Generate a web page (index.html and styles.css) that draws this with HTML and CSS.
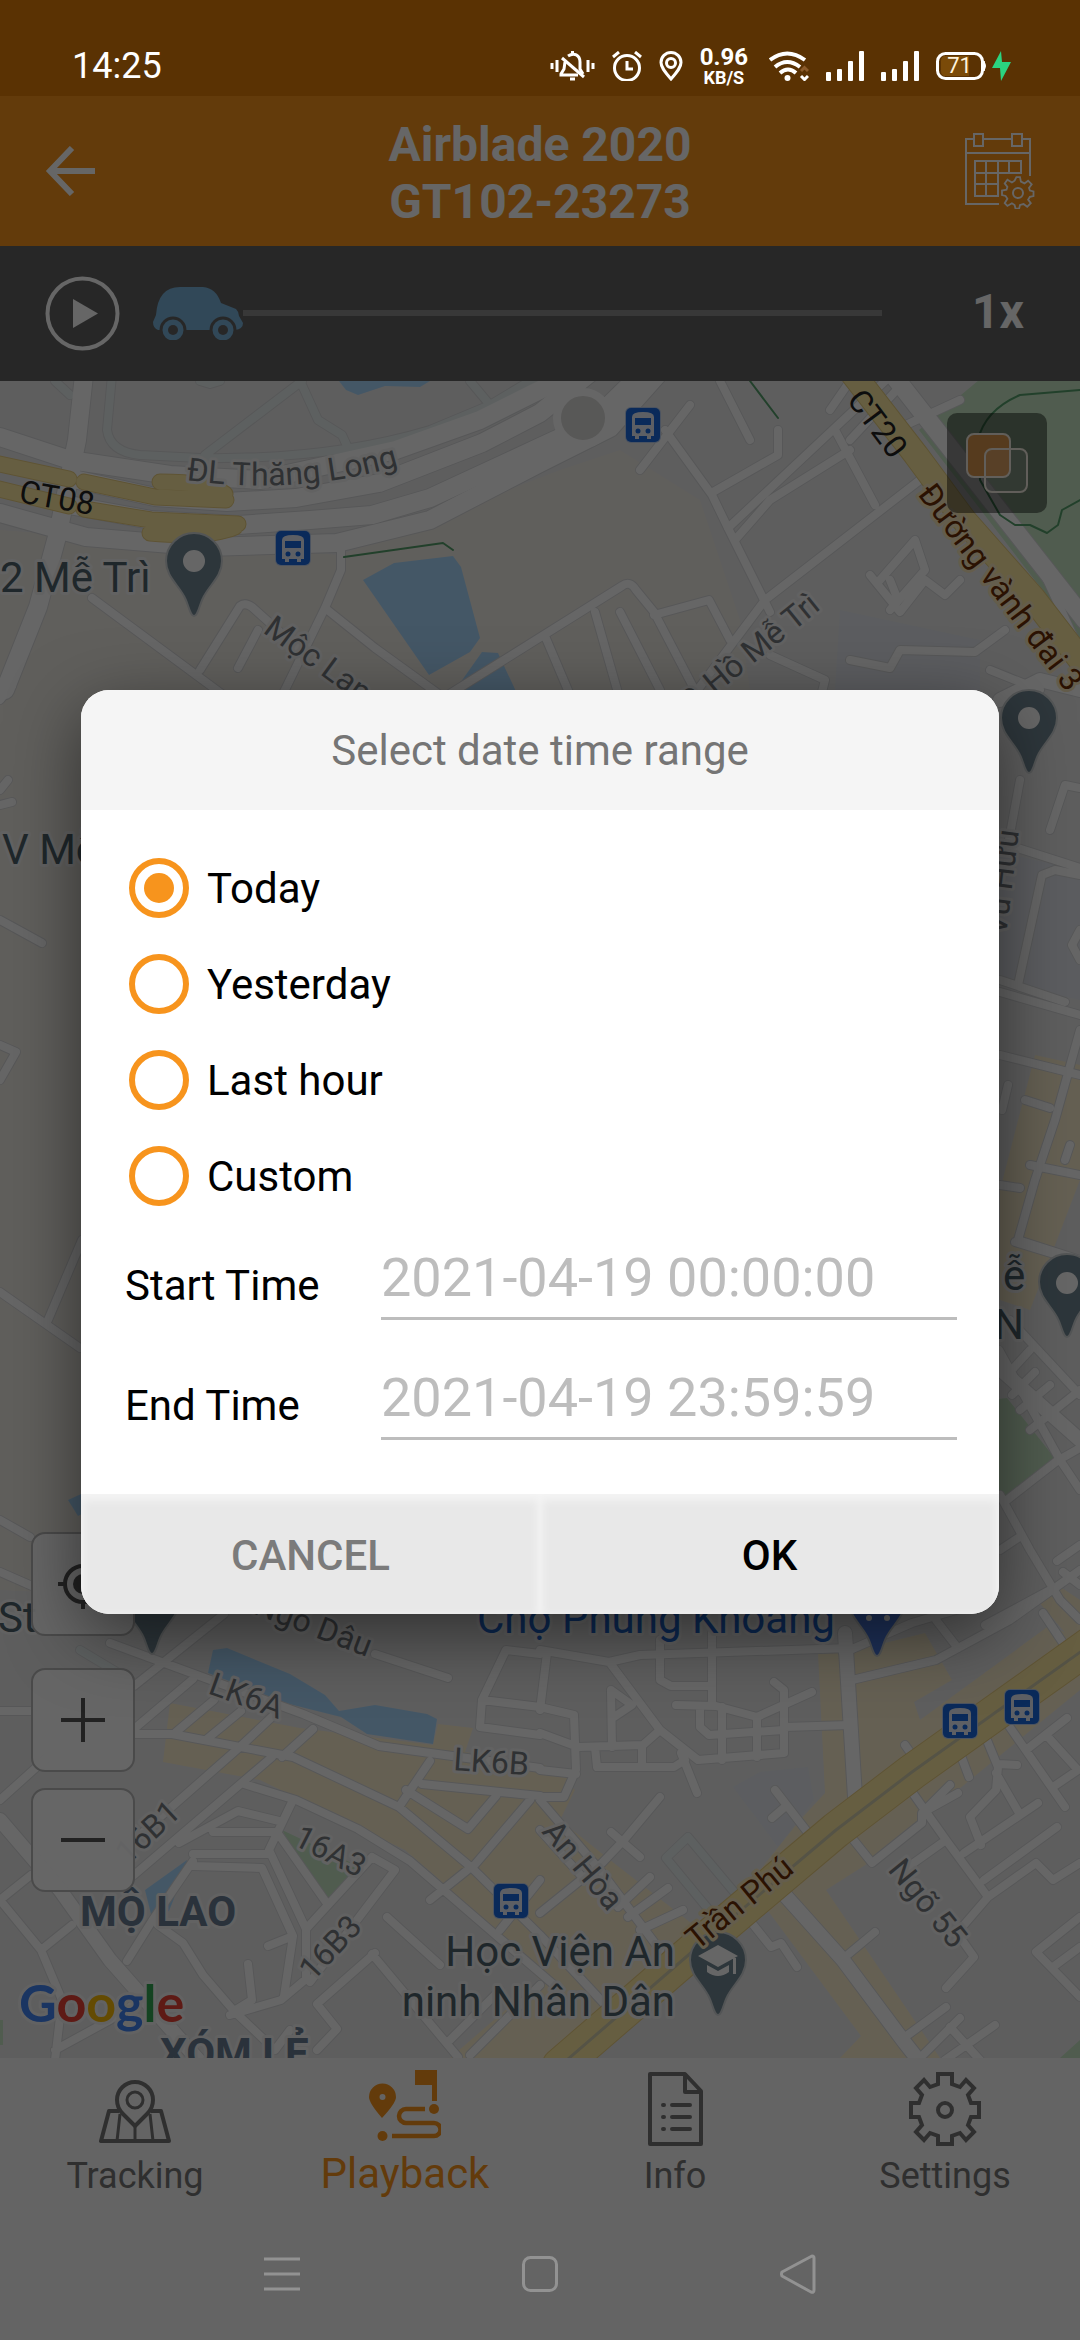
FILE: index.html
```html
<!DOCTYPE html>
<html lang="en">
<head>
<meta charset="utf-8">
<meta name="viewport" content="width=device-width, initial-scale=1">
<title>Playback</title>
<link rel="stylesheet" href="styles.css">
</head>
<body>
<div class="screen">
  <div class="status">
    <time class="status-time">14:25</time>
    <div class="status-icons">
      <svg width="45" height="30" viewBox="0 0 45 30" fill="none" stroke="#fff" stroke-width="3"><path d="M2 12v6M7 9v12M38 9v12M43 12v6"/><path d="M18 5c6-4 12-1 12 6v7l3 5M15 11l-1 7-3 5v1h17" /><path d="M12 7l22 19"/><path d="M22.500 0v3M20 28h5" stroke-width="3"/></svg>
      <svg width="30" height="30" viewBox="0 0 30 30" fill="none" stroke="#fff" stroke-width="3"><circle cx="15" cy="17" r="12.500"/><path d="M15 10v8h6M1 6l6-5M29 6l-6-5"/></svg>
      <svg width="24" height="30" viewBox="0 0 24 30" fill="none" stroke="#fff" stroke-width="3"><path d="M12 28C5 20 2 16 2 11.500a10 10 0 0 1 20 0C22 16 19 20 12 28z"/><circle cx="12" cy="12" r="4.500"/></svg>
      <div class="speed"><span>0.96</span><small>KB/S</small></div>
      <svg width="40" height="30" viewBox="0 0 40 30" fill="none" stroke="#fff" stroke-width="4"><path d="M1 9q17-13 35 0M6 16q12-10 25 0M11 22q8-7 16 0"/><circle cx="18.500" cy="27" r="3" fill="#fff" stroke="none"/><path d="M32 20l3.500-3.500L39 20" stroke="#8a5a2a" stroke-width="3"/><path d="M32 25l3.500 3.500L39 25" stroke-width="3"/></svg>
      <svg width="38" height="30" viewBox="0 0 38 30" fill="#fff"><rect y="21" width="5" height="9" rx="1"/><rect x="11" y="18" width="5" height="12" rx="1"/><rect x="22" y="10" width="5" height="20" rx="1"/><rect x="33" width="5" height="30" rx="1"/></svg>
      <svg width="38" height="30" viewBox="0 0 38 30" fill="#fff"><rect y="21" width="5" height="9" rx="1"/><rect x="11" y="18" width="5" height="12" rx="1"/><rect x="22" y="10" width="5" height="20" rx="1"/><rect x="33" width="5" height="30" rx="1"/></svg>
      <svg width="76" height="30" viewBox="0 0 76 30"><rect x="1.500" y="2.500" width="45" height="25" rx="8" fill="none" stroke="#fff" stroke-width="3"/><path d="M8 5h25v20H8q-3-1-3-5V10q0-4 3-5z" fill="#7a4a08"/><path d="M48 10q3 5 0 10z" fill="#fff" stroke="#fff"/><text x="23.500" y="22" text-anchor="middle" class="battery">71</text><path d="M65 0L56 17h8l1 13 10-19h-9z" fill="#2bd480"/></svg>
    </div>
  </div>

  <header class="header">
    <button class="icon-btn" aria-label="Back"><svg width="50" height="50" viewBox="0 0 50 50" fill="none" stroke="#fff" stroke-width="6"><path d="M27 2L5 25l22 23M5 25h45"/></svg></button>
    <h1 class="title">Airblade 2020<br>GT102-23273</h1>
    <button class="icon-btn" aria-label="Select dates"><svg width="70" height="76" viewBox="0 0 70 76" fill="none" stroke="#fff" stroke-width="2"><path d="M8 6H1v65h33M18 6h29M57 6h8v37M1 20h64"/><path d="M9 1h9v12H9zM47 1h10v12H47z"/><path d="M10 28h46v12H10zM10 40v23h23V28M10 51h23M21 28v35M44 28v12"/><circle cx="53" cy="60" r="5"/><path d="M51 44h4l1 5 4 2 4-3 4 4-3 4 1 3 4 1v5l-4 1-2 3 3 4-4 4-4-3-4 1-1 4h-4l-1-4-3-2-5 3-3-3 3-5-2-3-4-1v-5l5-1 1-3-3-4 3-4 5 3 3-2z" transform="translate(5.500 4.500) scale(.9)"/></svg></button>
  </header>

  <section class="player">
    <button class="icon-btn" aria-label="Play"><svg width="75" height="75" viewBox="0 0 75 75"><circle cx="37.500" cy="37.500" r="35" fill="none" stroke="#fff" stroke-width="4"/><path d="M28 23l25 14.500L28 52z" fill="#fff"/></svg></button>
    <input class="seek" type="range" min="0" max="100" value="0" aria-label="Playback position">
    <button class="rate">1x</button>
  </section>

  <main class="map">
    <svg class="map-canvas" viewBox="0 381 1080 1677" preserveAspectRatio="xMidYMid slice" role="img" aria-label="Map">
      <defs>
        <g id="small">
          <path d="M341 550V570L325 608 280 700M325 608L375 648 440 695M92 598L230 700M200 670L240 606Q245 602 252 607L300 650M238 668L258 630"/>
          <path d="M448 695L622 586Q630 580 636 590L654 612 700 700M545 636L570 695M595 612L620 700M654 615L709 600 730 640M620 612L660 690M665 430L712 495 728 528 770 612M778 430V455L713 492M728 528L870 395 885 381M690 700L765 600 920 480M735 540L770 500 850 450M690 405L640 470M835 430L875 505M850 440L905 381"/>
          <path d="M880 580L915 540 925 570 890 610 898 600 890 580M870 575L900 612 925 580 945 595 960 580M1038 560L1075 640M850 660L890 668 900 650 975 652 1005 630M770 655L825 680 820 700M990 670L1040 690M720 381L750 440M830 410L850 381M960 400L895 430"/>
          <path d="M0 920L42 943M0 1045L16 1052 0 1080M0 1292L80 1348M48 1320L82 1240M30 1537L0 1520M0 1572L32 1586M0 1711H32M0 700L12 686M0 790L8 780M0 805L12 802"/>
          <path d="M1020 780L1008 845M1050 830L1065 785 1080 788M1008 845L1080 868M1018 985L1042 875 1055 870 1080 875M1000 980L1065 1002M1000 992L1080 1015M1000 1055L1060 1070 1080 1075M1008 1085L1002 1110M1080 1030L1055 1120 1035 1180 1018 1240 1080 1260M1000 1185L1020 1188M1025 1100L1050 1108M1030 1165L1080 1175M1065 1160L1070 1145M1080 930L1072 945 1080 960"/>
          <path d="M1010 1320L1080 1395M999 1350L1060 1460 1080 1490M1000 1495L1030 1550 1060 1600 1080 1620M1057 1461L1007 1500M1000 1550L1018 1538M985 1625L1050 1590M1057 1461L1080 1448M1030 1430L1080 1390M1020 1410L1050 1385M1012 1395L1035 1372M1010 1372L1030 1350M1057 1561L1080 1545M1063 1572L1080 1585M1015 1242L1080 1262"/>
          <path d="M540 1650L609 1662 640 1655 850 1648M610 1663L660 1730 698 1760 784 1753V1690L774 1682M660 1640V1680L671 1686H710M712 1633V1703M676 1705L716 1706 757 1717 812 1692M700 1707V1727L709 1735 783 1730M722 1707V1760M757 1717V1757M784 1727L850 1725M852 1680L936 1660 1010 1620 1080 1570M843 1653L912 1623 990 1600M936 1620L957 1647M1043 1613L1063 1643M611 1690L612 1747M611 1690L632 1705 614 1717M540 1733L578 1747 643 1745 660 1730M540 1707L574 1715 576 1770 564 1797H540M595 1747L597 1767H674L685 1760M642 1745V1767M681 1753L697 1793M547 1653L540 1710M540 1770L576 1774"/>
          <path d="M660 1797L624 1840 602 1863 540 1913M611 1832L640 1857M775 1790L812 1838M772 1818L786 1806M747 1917L771 1947 781 1943 797 1967M875 1932L845 1957M852 1838L872 1863 922 1823V1813L958 1793M912 1792L946 1840 988 1897 957 1933 974 1957 946 1988M925 1810L950 1785M946 1840L908 1867M984 1733L998 1767 996 1790 970 1817 981 1845M998 1764L1017 1765M996 1773L1019 1813M1038 1803L964 1853M1057 1827L984 1880M1007 1723L1065 1807M1067 1718L1026 1750M1048 1737L1078 1770 1053 1787M988 1897L1036 1863 1053 1880 1080 1863M1080 1917L1036 1952 1080 1997M1053 1967L1080 1947M946 2007L905 2037M960 2018L920 2058M995 2025L945 2060M950 2027L980 2060M960 1753L969 1777M905 1745L912 1755M618 1907L650 1877M628 1917L668 1888M640 1930L683 1910"/>
          <path d="M134 1686L224 1614M110 1643L186 1671 303 1714 379 1746 540 1768M134 1729L193 1679M134 1734H172L293 1757 399 1807 472 1868 540 1935 610 2010M176 1732L214 1700M207 1739L241 1711M241 1746L275 1714M282 1757L313 1729M241 1746L134 1840M272 1757L134 1875M244 1784L296 1800 358 1829 410 1861 490 1930 560 1990M399 1807L430 1761M422 1784L540 1796M406 1790L468 1829 496 1796M472 1868L530 1800M179 1843L238 1811 279 1821M213 1832H275M193 1854H269M193 1866L262 1868 293 1936 284 1996M293 1800L269 1850 306 1929V1979L281 2000 230 2015M279 1835L328 1905 372 1857M306 1929L328 1905M372 1857L395 1870 310 1982M193 1861L152 1921 127 1961M0 1800L50 1755M0 1900L41 1950 62 2000 55 2060M41 1950L72 1925M55 2050L110 2020 140 2000M0 1900L31 1875M158 1925L183 1943 203 1975 234 2011 275 2050 290 2030M248 1964L252 2000 234 2011M268 1946L293 1936M387 1917L440 1965M375 1953L317 2004 337 2029 317 2050M372 1954L458 2057M482 1700L506 1650 540 1654M482 1700L540 1707M482 1700L480 1727 540 1735M375 1654L448 1678M540 1800L600 1870 660 1950M540 1830L585 1880M500 1930L540 1880M430 1900L470 1868M450 2040L500 1990M470 2055L540 1985"/>
        </g>
        <g id="wide">
          <path d="M84 375L77 440 58 533 38 607 5 690M0 437L70 460 170 475 260 480 396 450 480 420 580 370M0 513L86 537 207 547 337 543 430 520 540 463 610 428 660 372"/>
          <path d="M69 478L155 497 227 502 296 498 379 483 482 443 540 413 600 365M69 505L151 520 238 525 310 520 372 515 430 498 540 447 590 424 650 365"/>
          <path d="M893 375L1085 620"/>
        </g>
        <g id="mid"><path d="M845 1633L855 1797M783 1893L843 1960 905 2043 920 2062M0 1820L60 1890 110 1960 200 2062M1000 700L1040 680 1080 690M990 1360L1080 1440"/></g>
        <g id="tint"><path d="M112 375L107 430Q110 452 140 455L200 458Q330 460 430 430L490 405 540 375M205 455L302 381M302 385L318 420 342 435 348 448M470 381L490 405M709 1910L666 1858 688 1837 735 1893M55 381L70 395M200 381L210 384 220 381M80 1650L130 1680"/></g>
        <g id="gold"><path d="M-5 463L69 479M84 482L155 497 226 500M-5 488L69 506M84 509L151 520 238 524M160 482Q210 482 225 494M150 533Q210 538 235 527"/></g>
        <g id="pin"><path d="M0 54C-4 54-5 44-9 36-15 23-28 15-28-1A28 28 0 1 1 28-1C28 15 15 23 9 36 5 44 4 54 0 54z"/></g>
        <g id="bus"><rect x="-18" y="-18" width="36" height="36" rx="6" fill="#bcd0f0"/><rect x="-17" y="-17" width="34" height="34" rx="5" fill="#1a6ae0"/><path d="M-11 11V-8Q-11-13 0-13T11-8V11H8V14H4V11H-4V14H-8V11z" fill="#e8eefb"/><path d="M-8-7H8V0H-8z" fill="#1a6ae0"/><circle cx="-5" cy="6" r="2.500" fill="#1a6ae0"/><circle cx="5" cy="6" r="2.500" fill="#1a6ae0"/></g>
      </defs>

      <rect y="381" width="1080" height="1677" fill="#ebebec"/>
      <path fill="#f1ede6" d="M0 530L340 555 560 470 620 450 700 500 740 620 760 760 200 1600 0 1590z"/>
      <path fill="#e5e9ef" d="M840 610L980 640V690H835zM990 850L1080 870V1000L990 980zM733 1787L760 1772 808 1767 814 1800 778 1847z"/>
      <path fill="#c7e7c5" d="M985 375L919 430 1085 645V375zM990 1400L1007 1398 1057 1461 1007 1500 990 1494zM282 1830L358 1866 327 1907zM1060 2058L1080 2040V2058zM0 2020H3V2045H0z"/>
      <path fill="#fdf0cf" d="M163 1762L170 1703 300 1728 433 1745 438 1724 473 1728 465 1752 545 1765 575 1790 560 1820 610 1860 700 1930 640 2000 560 2058H450L540 1980 440 1880 405 1850 260 1780z"/>
      <path fill="#fdf0cf" d="M818 1653L845 1653 925 1633 952 1680 914 1702 920 1720 1050 1625 1080 1640V1690L970 1780 870 1862 826 1890 940 2058H840L861 2036 760 1900 690 1960 720 1920 800 1820 825 1793zM540 1772L570 1775 562 1790H540zM1035 1055L1080 1065V1180L1030 1310 1000 1300V1190zM1037 1600L1050 1580 1080 1600V1650z"/>
      <path fill="#abdaff" d="M339 375V381L346 390 358 395 385 386 420 387 430 381V375zM363 580L394 563 453 556 461 567 480 638 470 652 429 675zM448 700L482 652 498 653 520 700zM213 1650L227 1648 290 1674 325 1695 339 1711 375 1705 427 1714 437 1719 433 1744 367 1734 341 1717 289 1704 208 1673zM187 1860L186 1868 169 1911 152 1918 145 1890zM68 1500L78 1516 90 1510V1490z"/>
      <g class="lines">
        <use href="#small" class="case" stroke-width="10"/><use href="#tint" class="case" stroke-width="10"/>
        <use href="#mid" class="case" stroke-width="16"/><use href="#wide" class="case" stroke-width="20"/>
        <use href="#small" class="road" stroke-width="8"/><use href="#tint" stroke="#e9f1f0" stroke-width="8"/>
        <use href="#mid" class="road" stroke-width="14"/><use href="#wide" class="road" stroke-width="18"/>
        <ellipse cx="583" cy="418" rx="26" ry="26" fill="#dcdbd9" stroke="#fff" stroke-width="8"/>
        <use href="#gold" stroke="#ecd083" stroke-width="17"/><use href="#gold" stroke="#ffeca3" stroke-width="15"/>
        <path d="M850 370L916 455 964 520 1033 598 1090 672" stroke="#e8cf80" stroke-width="26"/>
        <path d="M850 370L916 455 964 520 1033 598 1090 672" stroke="#ffeca3" stroke-width="24"/>
        <path d="M1100 1638L912 1772 836 1830 700 1945 560 2066" stroke="#ecd083" stroke-width="37"/>
        <path d="M1100 1638L912 1772 836 1830 700 1945 560 2066" stroke="#ffeca3" stroke-width="35"/>
        <path d="M1100 1638L912 1772 836 1830 700 1945 560 2066" stroke="#d5cfae" stroke-width="3"/>
        <path d="M344 557L443 543 453 550M750 381L778 418M1080 390L1020 395Q985 410 978 440L980 480 1000 515 1015 525 1030 525 1047 533 1058 525 1062 510 1080 500" stroke="#56a06c" stroke-width="2"/>
      </g>

      <g fill="#718793" stroke="#cfd4d6" stroke-width="2">
        <use href="#pin" x="194" y="562"/><use href="#pin" x="1029" y="719"/><use href="#pin" x="1067" y="1283"/><use href="#pin" x="152" y="1600"/><use href="#pin" x="718" y="1961"/>
        <use href="#pin" x="877" y="1602" fill="#4b7be0"/>
      </g>
      <g fill="#fff"><circle cx="194" cy="561" r="11"/><circle cx="1029" cy="718" r="11"/><circle cx="1067" cy="1283" r="11"/><circle cx="869" cy="1618" r="3"/><circle cx="887" cy="1618" r="3"/>
        <path d="M698 1956L718 1945 738 1956 718 1967zM707 1965L718 1971 729 1965V1972Q718 1980 707 1972zM733 1958H736V1974H733z"/></g>
      <use href="#bus" x="643" y="425"/><use href="#bus" x="293" y="548"/><use href="#bus" x="960" y="1721"/><use href="#bus" x="1022" y="1707"/><use href="#bus" x="511" y="1901"/>

      <g class="street">
        <path id="thang-long" d="M186 480Q300 496 402 465" fill="none" stroke="none"/>
        <text><textPath href="#thang-long">ĐL Thăng Long</textPath></text>
        <text transform="translate(262 632) rotate(36)">Mộc Lan</text>
        <text transform="translate(690 715) rotate(-39)">P. Hồ Mễ Trì</text>
        <text transform="translate(1006 936) rotate(-83)">Vũ Hữu</text>
        <text transform="translate(252 1613) rotate(21)">Ngõ Dâu</text>
        <text transform="translate(207 1693) rotate(20)">LK6A</text>
        <text transform="translate(453 1770) rotate(4)">LK6B</text>
        <text transform="translate(292 1844) rotate(27)">16A3</text>
        <text transform="translate(313 1982) rotate(-47)">16B3</text>
        <text transform="translate(128 1865) rotate(-43)">16B1</text>
        <text transform="translate(541 1832) rotate(50)">An Hòa</text>
        <text transform="translate(887 1870) rotate(51)">Ngõ 55</text>
      </g>
      <g class="street highway">
        <text transform="translate(18 502) rotate(10)">CT08</text>
        <text transform="translate(846 400) rotate(53)">CT20</text>
      </g>
      <g class="street avenue">
        <text transform="translate(917 494) rotate(53)">Đường vành đai 3</text>
        <text transform="translate(697 1951) rotate(-39)">Trần Phú</text>
      </g>
      <g class="place">
        <text x="0" y="592">2 Mễ Trì</text>
        <text x="2" y="864">V Mễ</text>
        <text x="1003" y="1290">ễ</text>
        <text x="1024" y="1339" text-anchor="end">N</text>
        <text x="-2" y="1632">St</text>
        <text x="675" y="1966" text-anchor="end">Học Viện An</text>
        <text x="675" y="2016" text-anchor="end">ninh Nhân Dân</text>
        <text x="477" y="1633" class="market">Chợ Phùng Khoang</text>
      </g>
      <g class="district">
        <text x="80" y="1926">MỘ LAO</text>
        <text x="160" y="2068">XÓM LẺ</text>
      </g>
      <text x="19" y="2022" class="google"><tspan fill="#4285f4">G</tspan><tspan fill="#ea4335">o</tspan><tspan fill="#fbbc05">o</tspan><tspan fill="#4285f4">g</tspan><tspan fill="#34a853">l</tspan><tspan fill="#ea4335">e</tspan></text>
    </svg>

    <button class="layers" aria-label="Map layers"><svg width="64" height="62" viewBox="0 0 64 62" stroke="#f3ece0" stroke-width="2"><rect x="2" y="2" width="43" height="43" rx="7" fill="#d8944c"/><rect x="20" y="17" width="42" height="43" rx="7" fill="#fff" fill-opacity=".12"/></svg></button>
    <div class="map-controls">
      <button class="map-btn locate" aria-label="My location"><svg width="52" height="52" viewBox="0 0 52 52" fill="none" stroke="#555" stroke-width="4"><circle cx="26" cy="26" r="18"/><circle cx="26" cy="26" r="10" fill="#555" stroke="none"/><path d="M26 1v7M26 44v7M1 26h7M44 26h7"/></svg></button>
      <button class="map-btn" aria-label="Zoom in"><svg width="44" height="44" viewBox="0 0 44 44" stroke="#555" stroke-width="4"><path d="M0 22h44M22 0v44"/></svg></button>
      <button class="map-btn" aria-label="Zoom out"><svg width="44" height="44" viewBox="0 0 44 44" stroke="#555" stroke-width="4"><path d="M0 22h44"/></svg></button>
    </div>
  </main>

  <nav class="tabs">
    <a href="#tracking" class="tab"><svg width="72" height="72" viewBox="0 0 72 72" fill="none" stroke="#777" stroke-width="4" stroke-linejoin="round"><path d="M20 37H10L2 67h68l-8-30H52"/><path d="M36 52L24 40Q18 34 18 26a18 18 0 0 1 36 0q0 8-6 14z"/><circle cx="36" cy="26" r="8" stroke-width="3"/><path d="M21 40l-3 27M51 40l3 27M36 52v15" stroke-width="3"/></svg>Tracking</a>
    <a href="#playback" class="tab active"><svg width="72" height="72" viewBox="0 0 72 72" fill="#f7941d"><path d="M46 0h22v31h-5V15H46z"/><path fill-rule="evenodd" d="M13 48Q0 33 0 27a13.500 13.500 0 0 1 27 0Q27 33 13 48zM13.500 24a3 3 0 1 0 0 6 3 3 0 0 0 0-6z"/><circle cx="65" cy="39" r="5"/><circle cx="13.500" cy="66" r="5"/><path d="M56 39H37a7 7 0 0 0 0 14h28a6.500 6.500 0 0 1 0 13H23" fill="none" stroke="#f7941d" stroke-width="4.500"/></svg>Playback</a>
    <a href="#info" class="tab"><svg width="72" height="76" viewBox="0 0 72 76" fill="none" stroke="#777" stroke-width="4" stroke-linejoin="round"><path d="M11 4h35l16 17v53H11zM46 4v18h16"/><path d="M33 35h18M33 47h18M33 59h18M24 35h1M24 47h1M24 59h1" stroke-linecap="round"/></svg>Info</a>
    <a href="#settings" class="tab"><svg width="72" height="76" viewBox="0 0 72 76" fill="none" stroke="#777" stroke-width="4"><path d="M29 4h14v10l8 3 6-7 8 8-6 7 3 8h8v14h-8l-3 8 6 7-8 8-6-7-8 3v8H29v-8l-8-3-6 7-8-8 6-7-3-8H2V33h8l3-8-6-7 8-8 6 7 8-3z"/><circle cx="36" cy="40" r="7"/></svg>Settings</a>
  </nav>

  <div class="sysnav">
    <button aria-label="Menu"><svg width="36" height="40" viewBox="0 0 36 40" stroke="#929292" stroke-width="3"><path d="M0 5h36M0 20h36M0 35h36"/></svg></button>
    <button aria-label="Home"><svg width="36" height="40" viewBox="0 0 36 40" fill="none" stroke="#929292" stroke-width="3"><rect x="1.500" y="3.500" width="33" height="33" rx="7"/></svg></button>
    <button aria-label="Back"><svg width="36" height="40" viewBox="0 0 36 40" fill="none" stroke="#929292" stroke-width="3" stroke-linejoin="round"><path d="M2 18L32 2q2 0 2 2v32q0 3-3 2L2 22q-1-2 0-4z"/></svg></button>
  </div>

  <div class="scrim">
    <form class="dialog" role="dialog" aria-labelledby="dialog-title">
      <h2 id="dialog-title" class="dialog-title">Select date time range</h2>
      <div class="dialog-body">
        <div class="options" role="radiogroup" aria-labelledby="dialog-title">
          <label class="option"><input type="radio" name="range" checked>Today</label>
          <label class="option"><input type="radio" name="range">Yesterday</label>
          <label class="option"><input type="radio" name="range">Last hour</label>
          <label class="option"><input type="radio" name="range">Custom</label>
        </div>
        <div class="fields">
          <div class="field"><label for="start">Start Time</label><input id="start" type="text" value="2021-04-19 00:00:00"></div>
          <div class="field"><label for="end">End Time</label><input id="end" type="text" value="2021-04-19 23:59:59"></div>
        </div>
      </div>
      <div class="actions">
        <button type="button" class="cancel">CANCEL</button>
        <button type="button">OK</button>
      </div>
    </form>
  </div>
</div>
</body>
</html>
```
FILE: styles.css
```css
* { box-sizing: border-box; }

body {
  margin: 0;
  font-family: Roboto, "Noto Sans", sans-serif;
  color: #000;
}

button {
  margin: 0;
  padding: 0;
  border: 0;
  background: none;
  font: inherit;
  color: inherit;
}

svg { display: block; }

.screen {
  position: relative;
  display: flex;
  flex-direction: column;
  min-height: 100vh;
  background: #fafafa;
}

/* System bars stay above the scrim */
.status, .sysnav { position: relative; z-index: 2; }

.status {
  display: flex;
  align-items: center;
  justify-content: space-between;
  height: 96px;
  padding: 36px 68px 0 72px;
  background: #5a3203;
  color: #fff;
}

.status-time { font-size: 36px; }

.status-icons {
  display: flex;
  align-items: center;
  gap: 17px;
}

.speed {
  display: flex;
  flex-direction: column;
  align-items: center;
  margin-right: 4px;
  font-size: 24px;
  line-height: 24px;
  font-weight: 700;
}

.speed small { font-size: 18px; line-height: 18px; }

.battery { font-size: 22px; fill: #fff3dc; }

.header {
  display: grid;
  grid-template-columns: 1fr auto 1fr;
  align-items: center;
  height: 150px;
  padding: 0 45px;
  background: #f7941d;
  color: #fff;
}

.icon-btn { flex: none; justify-self: start; }
.title + .icon-btn { justify-self: end; }

.title {
  margin: 0;
  padding-top: 3px;
  font-size: 48px;
  line-height: 57px;
  font-weight: 700;
  text-align: center;
}

.player {
  display: flex;
  align-items: center;
  height: 135px;
  padding: 0 56px 0 45px;
  background: #636363;
  color: #fff;
}

.seek {
  flex: 1;
  appearance: none;
  height: 52px;
  margin: 0 90px 2px 33px;
  background: linear-gradient(#8d8d8d, #8d8d8d) center / 100% 6px no-repeat;
}

.seek::-webkit-slider-thumb {
  appearance: none;
  width: 90px;
  height: 54px;
  background: #636363 url("data:image/svg+xml,%3Csvg xmlns='http://www.w3.org/2000/svg' viewBox='0 0 90 54'%3E%3Cpath d='M5 44Q0 42 0 36L3 29Q5 1 27 1H50Q63 2 68 17L83 23Q86 26 86 30L90 37Q90 43 82 44Z' fill='%237ab4dc'/%3E%3Cg fill='%237ab4dc' stroke='%23636363' stroke-width='3'%3E%3Ccircle cx='20' cy='44' r='12'/%3E%3Ccircle cx='70' cy='44' r='12'/%3E%3C/g%3E%3Cg fill='%23636363'%3E%3Ccircle cx='20' cy='44' r='5'/%3E%3Ccircle cx='70' cy='44' r='5'/%3E%3C/g%3E%3C/svg%3E") center / 90px 54px no-repeat;
}

.rate { padding-bottom: 5px; font-size: 48px; font-weight: 700; }

.map {
  position: relative;
  flex: 1;
  min-height: 600px;
  overflow: hidden;
}

.map-canvas {
  position: absolute;
  inset: 0;
  width: 100%;
  height: 100%;
}

.lines { fill: none; stroke-linejoin: round; stroke-linecap: round; }
.case { stroke: #d9dadc; }
.road { stroke: #fff; }

.street, .place, .district, .google {
  paint-order: stroke;
  stroke: #f4f4f4;
  stroke-width: 6px;
  stroke-linejoin: round;
}

.street { font-size: 32px; fill: #777b80; }
.highway { fill: #222; stroke: none; }
.avenue { fill: #6b2f06; stroke: #fbe9bd; }
.place { font-size: 42px; fill: #4f626b; }
.market { fill: #1f66d0; }
.district { font-size: 42px; font-weight: 700; fill: #697d94; }
.google { font-family: Lato, sans-serif; font-size: 52px; font-weight: 700; }

.layers {
  position: absolute;
  top: 32px;
  right: 33px;
  display: grid;
  place-items: center;
  width: 100px;
  height: 100px;
  border-radius: 10px;
  background: rgba(0, 0, 0, .45);
}

.map-controls {
  position: absolute;
  left: 31px;
  bottom: 166px;
  display: flex;
  flex-direction: column;
  gap: 16px;
}

.map-btn {
  display: grid;
  place-items: center;
  width: 104px;
  height: 104px;
  border: 2px solid #b9b9b9;
  border-radius: 14px;
  background: rgba(255, 255, 255, .95);
}

.locate { margin-bottom: 16px; }

.tabs {
  display: grid;
  grid-template-columns: repeat(4, 1fr);
  height: 150px;
  padding-bottom: 10px;
  background: #fafafa;
}

.tab {
  display: flex;
  flex-direction: column;
  align-items: center;
  justify-content: flex-end;
  gap: 8px;
  font-size: 36px;
  line-height: 44px;
  color: #777;
  text-decoration: none;
}

.active { font-size: 42px; line-height: 48px; color: #f7941d; }

.sysnav {
  display: flex;
  align-items: center;
  justify-content: center;
  gap: 222px;
  height: 132px;
  background: #646464;
}

.scrim {
  position: absolute;
  inset: 0;
  z-index: 1;
  display: flex;
  align-items: center;
  justify-content: center;
  padding: 96px 0 132px;
  background: rgba(0, 0, 0, .6);
}

.dialog {
  width: 85%;
  overflow: hidden;
  border-radius: 28px;
  background: #fff;
  box-shadow: 0 20px 70px rgba(0, 0, 0, .5);
}

.dialog-title {
  margin: 0;
  padding-top: 2px;
  font-size: 42px;
  line-height: 118px;
  font-weight: 400;
  text-align: center;
  color: #757575;
  background: #f5f5f5;
}

.dialog-body { padding: 30px 42px 54px 44px; }

.option {
  display: flex;
  align-items: center;
  gap: 18px;
  height: 96px;
  padding-left: 4px;
  font-size: 42px;
}

.option input {
  appearance: none;
  display: grid;
  place-items: center;
  width: 60px;
  height: 60px;
  margin: 0;
  border: 6px solid #f7941d;
  border-radius: 50%;
}

.option input:checked::before {
  content: "";
  width: 30px;
  height: 30px;
  border-radius: 50%;
  background: #f7941d;
}

.fields { display: grid; gap: 24px; }

.field {
  display: grid;
  grid-template-columns: 256px 1fr;
  align-items: center;
  height: 96px;
}

.field label { padding-top: 26px; font-size: 42px; }

.field input {
  width: 100%;
  height: 96px;
  padding: 14px 0 0;
  border: 0;
  border-bottom: 3px solid #bdbdbd;
  border-radius: 0;
  background: none;
  font: inherit;
  font-size: 54px;
  color: #bdbdbd;
}

.actions { display: grid; grid-template-columns: 1fr 1fr; }

.actions button {
  height: 120px;
  padding-top: 2px;
  background: #e8e8e8;
  box-shadow: inset 0 4px 10px 2px rgba(255, 255, 255, .55);
  font-size: 42px;
  font-weight: 500;
}

.actions .cancel { color: #7b7b7b; }
```
